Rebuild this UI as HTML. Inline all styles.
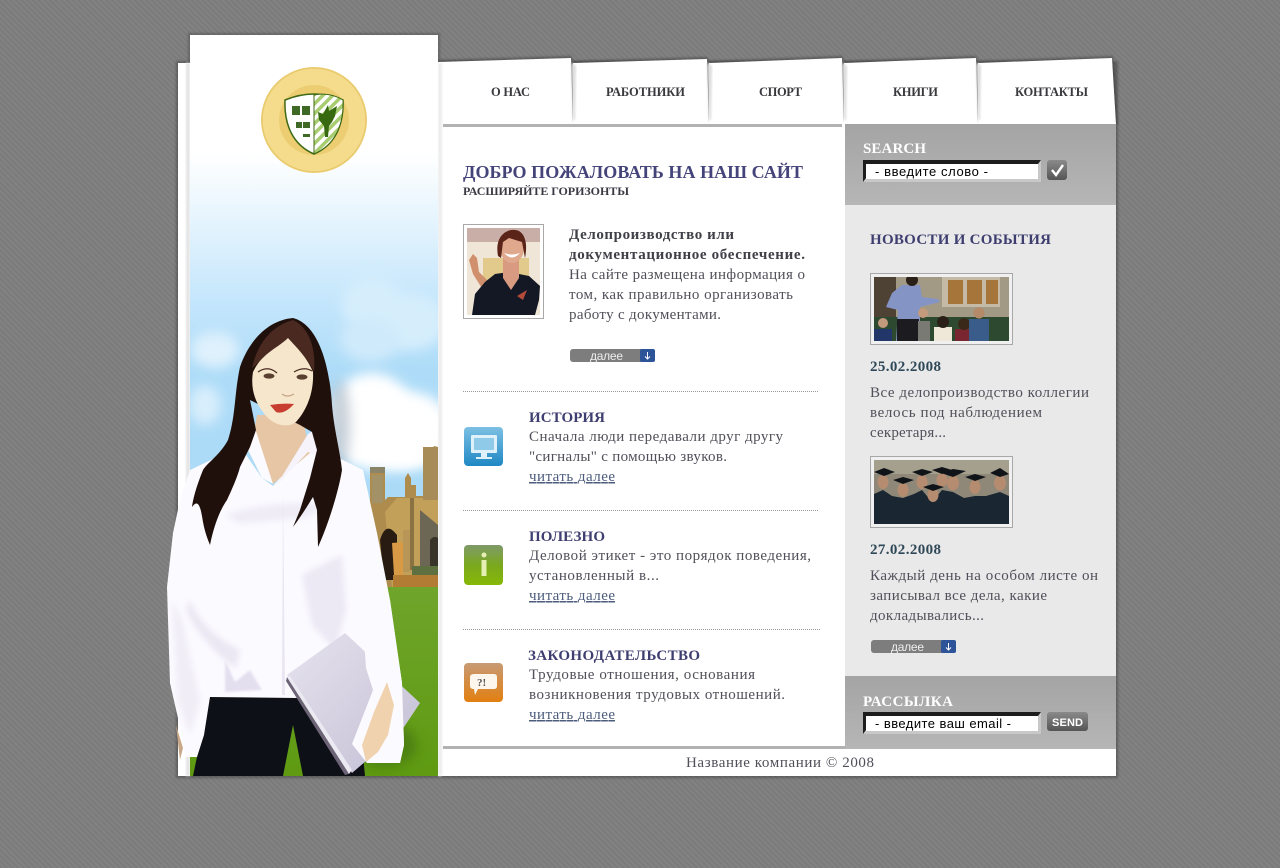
<!DOCTYPE html>
<html><head><meta charset="utf-8"><title>Добро пожаловать</title>
<style>
html,body{margin:0;padding:0;width:1280px;height:868px;overflow:hidden;background:#7f7f7f}
body{background:repeating-linear-gradient(45deg,#7b7b7b 0,#7b7b7b 2px,#828282 2px,#828282 4px)}
svg{position:absolute;left:0;top:0;display:block}
text{font-family:"Liberation Serif","Noto Serif CJK SC",serif;white-space:pre}
.b{font-size:15px;fill:#50505a}
.bb{font-size:15px;fill:#3f3f48;font-weight:bold}
.h{font-size:15px;fill:#3e3e70;font-weight:bold}
.nav{font-size:12.5px;fill:#3a3a3e;font-weight:bold}
.l{font-size:15px;fill:#4c5c7c;text-decoration:underline}
.d{font-size:15px;fill:#2f4858;font-weight:bold}
.w{font-size:15px;fill:#fff;font-weight:bold}
.s{font-family:"Liberation Sans",sans-serif;font-size:13px;fill:#000}
.m{font-family:"Liberation Sans",sans-serif;font-size:12px;fill:#eee}
</style></head><body>
<svg width="1280" height="868" viewBox="0 0 1280 868" xmlns="http://www.w3.org/2000/svg">
<defs>
<linearGradient id="sky" x1="0" y1="0" x2="0" y2="1"><stop offset="0" stop-color="#fff"/><stop offset=".16" stop-color="#fff"/><stop offset=".22" stop-color="#eef8fe"/><stop offset=".36" stop-color="#c4e6fc"/><stop offset=".45" stop-color="#aedcf8"/><stop offset="1" stop-color="#a4d6f4"/></linearGradient>
<linearGradient id="gs" x1="0" y1="0" x2="0" y2="1"><stop offset="0" stop-color="#a4a4a4"/><stop offset="1" stop-color="#b6b6b6"/></linearGradient>
<linearGradient id="gr" x1="0" y1="0" x2="0" y2="1"><stop offset="0" stop-color="#6fa52b"/><stop offset="1" stop-color="#5f9a12"/></linearGradient>
<linearGradient id="blue" x1="0" y1="0" x2="0" y2="1"><stop offset="0" stop-color="#7cc0e4"/><stop offset="1" stop-color="#1f88c4"/></linearGradient>
<linearGradient id="green" x1="0" y1="0" x2="0" y2="1"><stop offset="0" stop-color="#7f9a6a"/><stop offset=".5" stop-color="#7aa81e"/><stop offset="1" stop-color="#86b806"/></linearGradient>
<linearGradient id="orange" x1="0" y1="0" x2="0" y2="1"><stop offset="0" stop-color="#c89a74"/><stop offset="1" stop-color="#e27f10"/></linearGradient>
<linearGradient id="folder" x1="0" y1="0" x2="1" y2="1"><stop offset="0" stop-color="#e6e3ee"/><stop offset="1" stop-color="#c3bed4"/></linearGradient>
<linearGradient id="bt" x1="0" y1="0" x2="0" y2="1"><stop offset="0" stop-color="#8a8a8a"/><stop offset="1" stop-color="#555"/></linearGradient>
<filter id="b1" x="-20%" y="-20%" width="140%" height="140%"><feGaussianBlur stdDeviation="1"/></filter>
<filter id="b3" x="-30%" y="-30%" width="160%" height="160%"><feGaussianBlur stdDeviation="3"/></filter>
<filter id="b6" x="-60%" y="-60%" width="220%" height="220%"><feGaussianBlur stdDeviation="6"/></filter>
<clipPath id="pan"><rect x="190" y="35" width="248" height="741"/></clipPath>
<clipPath id="panw"><rect x="160" y="35" width="278" height="741"/></clipPath>
<pattern id="stripes" width="7" height="7" patternUnits="userSpaceOnUse" patternTransform="rotate(45)"><rect width="7" height="7" fill="#fff"/><rect width="3.500" height="7" fill="#a8cc70"/></pattern>
</defs>

<!-- page shadow and base -->
<rect x="176" y="61" width="942" height="717" fill="#333" opacity=".42" filter="url(#b1)"/>
<path d="M438 60L571 56L573 61L707 57L709 61L842 56L844 61L976 56L978 61L1113 56L1118 124H438Z" fill="#333" opacity=".45" filter="url(#b1)"/>
<rect x="188" y="33" width="252" height="32" fill="#444" opacity=".42" filter="url(#b1)"/>
<rect x="178" y="63" width="260" height="713" fill="#fff"/>
<rect x="438" y="124" width="678" height="652" fill="#fff"/>

<!-- tabs -->
<path d="M438 62L571 58L573 124L438 124Z" fill="#fff"/>
<path d="M573 63L707 59L709 124L573 124Z" fill="#fff"/>
<path d="M709 63L842 58L844 124L709 124Z" fill="#fff"/>
<path d="M844 63L976 58L978 124L844 124Z" fill="#fff"/>
<path d="M978 63L1112 58L1116 124L978 124Z" fill="#fff"/>
<path d="M571 62L576 66L575 120L573 120Z" fill="#dcdcdc" filter="url(#b1)"/>
<path d="M707 62L712 66L711 120L709 120Z" fill="#dcdcdc" filter="url(#b1)"/>
<path d="M842 62L847 66L846 120L844 120Z" fill="#dcdcdc" filter="url(#b1)"/>
<path d="M976 62L981 66L980 120L978 120Z" fill="#dcdcdc" filter="url(#b1)"/>

<text class="nav" x="491" y="96" textLength="39">О НАС</text>
<text class="nav" x="606" y="96" textLength="79">РАБОТНИКИ</text>
<text class="nav" x="759" y="96" textLength="43">СПОРТ</text>
<text class="nav" x="893" y="96" textLength="45">КНИГИ</text>
<text class="nav" x="1015" y="96" textLength="73">КОНТАКТЫ</text>

<!-- rules -->
<rect x="443" y="124" width="399" height="3" fill="#b2b2b2"/>
<rect x="443" y="746" width="402" height="3" fill="#b2b2b2"/>

<!-- left panel -->
<rect x="438" y="63" width="4" height="713" fill="#ececec" filter="url(#b1)"/>
<rect x="186" y="63" width="4" height="713" fill="#e4e4e4" filter="url(#b1)"/>
<rect x="190" y="35" width="248" height="741" fill="url(#sky)"/>
<g clip-path="url(#pan)">
 <ellipse cx="372" cy="305" rx="30" ry="28" fill="#d6eefc" filter="url(#b6)"/>
 <ellipse cx="410" cy="322" rx="36" ry="28" fill="#d6eefc" filter="url(#b6)"/>
 <ellipse cx="370" cy="340" rx="30" ry="22" fill="#cfeafb" filter="url(#b6)"/>
 <ellipse cx="372" cy="415" rx="42" ry="42" fill="#fff" filter="url(#b6)"/>
 <ellipse cx="410" cy="430" rx="42" ry="38" fill="#fff" filter="url(#b6)"/>
 <ellipse cx="385" cy="445" rx="50" ry="26" fill="#fff" filter="url(#b6)"/>
 <ellipse cx="215" cy="350" rx="24" ry="18" fill="#dff1fd" filter="url(#b6)"/>
 <ellipse cx="205" cy="405" rx="16" ry="20" fill="#d8eefc" filter="url(#b6)"/>
 <ellipse cx="340" cy="425" rx="10" ry="45" fill="#9aa8b8" opacity=".55" filter="url(#b6)"/>
 <!-- building -->
 <path d="M370 467H385V500L388 497H405V478L408 473L411 478V485H416V496H423V458L430 452L434 446L438 447V587H370Z" fill="#ad8c4e"/>
 <rect x="370" y="467" width="15" height="6" fill="#8a8468"/>
 <rect x="372" y="475" width="11" height="28" fill="#a39268"/>
 <path d="M385 512L397 498H438V587H392Z" fill="#c2a05a"/>
 <path d="M410 498H414V570H410Z" fill="#8b7242"/>
 <path d="M423 447L438 447V500H423Z" fill="#a88c58"/>
 <path d="M380 540Q386 520 397 535V580H384Z" fill="#281c12"/>
 <path d="M392 543L403 542V575H394Z" fill="#d89a44"/>
 <path d="M403 530H410V572H403Z" fill="#b89658"/>
 <path d="M420 510L438 525V570H420Z" fill="#6c6654"/>
 <path d="M430 540Q434 535 438 538V572H430Z" fill="#38342a"/>
 <rect x="412" y="566" width="26" height="10" fill="#5e7040"/>
 <rect x="393" y="575" width="45" height="12" fill="#b27c34"/>
 <rect x="190" y="587" width="248" height="189" fill="url(#gr)"/>
 <ellipse cx="385" cy="745" rx="32" ry="22" fill="#3e6e10" opacity=".6" filter="url(#b6)"/>
</g>

<g clip-path="url(#panw)">
 <!-- pants -->
 <path d="M210 695L298 695L312 720L362 745L365 776L303 776L293 725L283 776L193 776Z" fill="#0d1016"/>
 <!-- shirt -->
 <path d="M190 470L240 446L262 478L273 486L305 450L317 440L335 456L363 470L377 533L390 600L402 683L404 745L400 763L367 763L352 744L336 700L297 698L210 697L204 735L197 757L185 757L180 727L170 683L167 587L173 533L180 500Z" fill="#fbfaff"/>
 <path d="M190 600C200 625 220 640 240 650L236 668C215 655 195 630 186 610Z" fill="#ebe7f3" filter="url(#b3)"/>
 <path d="M302 575L342 555L346 610L335 650L312 625Z" fill="#ece8f4" filter="url(#b3)"/>
 <path d="M225 515C250 505 300 500 330 505L305 518L240 524Z" fill="#efecf6" filter="url(#b3)"/>
 <path d="M225 660L235 682L250 670L262 690L225 692Z" fill="#e4dfef" filter="url(#b1)"/>
 <path d="M283 490L285 695H282Z" fill="#e9e5f2"/>
 <path d="M172 600L178 700L190 735L200 700L182 620Z" fill="#f0edf6" filter="url(#b3)"/>
 <!-- neck -->
 <path d="M257 415L253 438L262 470L273 484L310 453L302 415Z" fill="#e6c6a4"/>
 <!-- collar -->
 <path d="M243 440L255 428L273 484L262 478Z" fill="#fbfaff"/>
 <path d="M308 434L317 428L318 456L308 452L276 486Z" fill="#f6f3fb"/>
 <!-- hair -->
 <path d="M293 318C270 320 250 338 240 367C234 395 236 415 228 440C220 455 208 462 203 470C195 490 193 500 192 507C199 497 201 510 203 522C205 533 208 540 210 545C214 525 220 510 227 500C234 485 238 475 240 467L250 447L256 430L250 400L300 425L312 432L317 450L310 478L300 510L293 527C302 515 308 505 313 497L317 510L318 547C326 530 338 495 342 470C340 450 334 430 332 405C330 370 320 325 293 318Z" fill="#20100c"/>
 <path d="M293 320C272 326 258 342 252 368L264 358C272 350 282 345 288 338C296 348 308 358 314 372C316 350 310 328 293 320Z" fill="#4a2a20"/>
 <!-- face -->
 <path d="M288 338C278 348 262 353 253 372C250 390 256 405 267 417C276 426 288 428 296 422C307 410 314 392 313 372C307 357 296 347 288 338Z" fill="#f6e6cc"/>
 <path d="M258 372Q268 365 277 373" fill="none" stroke="#4a2c20" stroke-width="1.200"/>
 <path d="M294 372Q304 366 312 371" fill="none" stroke="#4a2c20" stroke-width="1.200"/>
 <ellipse cx="269" cy="376" rx="5.500" ry="2.600" fill="#5a4030"/>
 <ellipse cx="302" cy="377" rx="5.500" ry="2.600" fill="#5a4030"/>
 <path d="M282 394Q287 398 294 394" fill="none" stroke="#c7a484" stroke-width="1.200"/>
 <path d="M270 405Q282 403 294 404Q284 415 276 412Z" fill="#c73e30"/>
 <!-- folder -->
 <path d="M287 675L345 633L420 703L402 730L352 773Z" fill="url(#folder)"/>
 <path d="M287 677L349 774L345 775L286 681Z" fill="#6d6478"/>
 <path d="M290 676L352 770L349 774L287 677Z" fill="#ebe9f1"/>
 <!-- right sleeve and cuff over folder -->
 <path d="M362 610L390 600L402 683L404 745L400 763L367 763L352 744L373 690L366 668Z" fill="#fbfaff"/>
 <path d="M387 682L374 712L362 745L366 762L378 752L388 735L394 705Z" fill="#f0d2ae"/>
 <path d="M176 725L180 760L183 748Z" fill="#c8a888"/>
</g>

<!-- logo -->
<circle cx="314" cy="120" r="53" fill="#f4dc8c"/>
<circle cx="314" cy="120" r="52" fill="none" stroke="#e8c96e" stroke-width="1.500"/>
<circle cx="314" cy="120" r="35" fill="#eccd72"/>
<path d="M285 100Q314 88 343 100C344 125 335 145 314 154C293 145 284 125 285 100Z" fill="#fff" stroke="#3f6a14" stroke-width="1.500"/>
<path d="M314 95Q330 92 343 100C344 125 335 145 314 154Z" fill="url(#stripes)" stroke="#3f6a14" stroke-width="1"/>
<rect x="292" y="106" width="8" height="9" fill="#3f6a25"/><rect x="302" y="106" width="8" height="9" fill="#3f6a25"/>
<rect x="296" y="122" width="6" height="6" fill="#3f6a25"/><rect x="303" y="122" width="7" height="6" fill="#3f6a25"/>
<rect x="303" y="134" width="7" height="3" fill="#3f6a25"/>
<path d="M318 112L323 114L328 105L329 111L337 106L335 116L332 122L329 126L328 137H325L324 126L319 120Z" fill="#376a10"/>

<!-- sidebar -->
<rect x="845" y="124" width="271" height="81" fill="url(#gs)"/>
<rect x="845" y="205" width="271" height="471" fill="#e9e9e9"/>
<rect x="845" y="676" width="271" height="73" fill="url(#gs)"/>

<text class="w" x="863" y="153" textLength="63">SEARCH</text>
<rect x="863" y="160" width="178" height="22" fill="#c8c8c8"/>
<path d="M863 160H1041L1038 164H866V178L863 182Z" fill="#1d1d1d"/>
<rect x="866" y="164" width="172" height="15" fill="#fff"/>
<text class="s" x="875" y="176" textLength="113">- введите слово -</text>
<rect x="1047" y="160" width="20" height="20" rx="3" fill="url(#bt)"/>
<path d="M1052 170L1056 175L1063 165" fill="none" stroke="#fff" stroke-width="2.400"/>

<text class="h" x="870" y="244" textLength="181">НОВОСТИ И СОБЫТИЯ</text>

<rect x="870.500" y="273.500" width="142" height="71" fill="#f0f0f0" stroke="#a8a8a8"/>
<svg x="874" y="277" width="135" height="64" viewBox="0 0 135 64">
 <rect width="135" height="64" fill="#8d8d80"/>
 <rect width="22" height="42" fill="#4e4234"/>
 <rect x="22" width="113" height="40" fill="#a39a86"/>
 <rect x="68" y="0" width="58" height="30" fill="#c4baa6"/>
 <rect x="74" y="3" width="15" height="24" fill="#a5753a"/><rect x="93" y="3" width="15" height="24" fill="#a5753a"/><rect x="112" y="3" width="12" height="24" fill="#a5753a"/>
 <rect y="40" width="135" height="24" fill="#2d4a30"/>
 <path d="M12 30L18 16L28 8L46 8L48 20L64 22L66 25L46 30L46 64H22L24 33Z" fill="#8494c4"/>
 <rect x="23" y="42" width="22" height="22" fill="#1c1c20"/>
 <circle cx="38" cy="3" r="6" fill="#2a2018"/>
 <rect x="0" y="52" width="18" height="12" fill="#23366a"/><circle cx="9" cy="46" r="5" fill="#c49a7c"/>
 <rect x="44" y="44" width="12" height="20" fill="#7a7a74"/><circle cx="49" cy="36" r="5" fill="#c49a7c"/>
 <rect x="60" y="50" width="18" height="14" fill="#efe8d8"/><circle cx="69" cy="45" r="6" fill="#2a2018"/>
 <rect x="81" y="52" width="20" height="12" fill="#7a2630"/><circle cx="90" cy="47" r="6" fill="#3a2818"/>
 <rect x="95" y="42" width="20" height="22" fill="#3a5c8a"/><circle cx="105" cy="36" r="5.500" fill="#b48a68"/>
</svg>
<text class="d" x="870" y="371" textLength="71">25.02.2008</text>
<text class="b" x="870" y="397" textLength="219">Все делопроизводство коллегии</text>
<text class="b" x="870" y="417" textLength="172">велось под наблюдением</text>
<text class="b" x="870" y="437" textLength="76">секретаря...</text>

<rect x="870.500" y="456.500" width="142" height="71" fill="#f0f0f0" stroke="#a8a8a8"/>
<svg x="874" y="460" width="135" height="64" viewBox="0 0 135 64">
 <rect width="135" height="64" fill="#8f8878"/>
 <rect x="0" y="0" width="135" height="14" fill="#a5a08e"/>
 <path d="M0 34L9 30L18 36L29 38L40 34L48 30L58 42L68 30L79 32L90 38L101 36L112 36L126 32L135 36V64H0Z" fill="#1a2632"/>
 <g fill="#b68c70">
  <ellipse cx="9" cy="22" rx="5.500" ry="7"/><ellipse cx="29" cy="30" rx="5.500" ry="7"/><ellipse cx="48" cy="22" rx="5.500" ry="7"/><ellipse cx="68" cy="20" rx="5.500" ry="7"/><ellipse cx="59" cy="35" rx="5.500" ry="7"/><ellipse cx="79" cy="23" rx="6" ry="7.500"/><ellipse cx="101" cy="27" rx="5.500" ry="7"/><ellipse cx="126" cy="23" rx="6" ry="7.500"/>
 </g>
 <g fill="#101419">
  <path d="M0 12L10 8L21 12L10 16Z"/><path d="M19 20L29 17L40 20L29 24Z"/><path d="M38 12L48 9L59 12L48 16Z"/><path d="M58 10L68 7L78 10L68 14Z"/><path d="M67 13L79 9L92 11L79 17Z"/><path d="M91 17L101 14L112 17L101 21Z"/><path d="M116 13L126 8L135 14L126 17Z"/><path d="M49 27L59 24L70 27L59 31Z"/>
 </g>
</svg>
<text class="d" x="870" y="554" textLength="71">27.02.2008</text>
<text class="b" x="870" y="580" textLength="228">Каждый день на особом листе он</text>
<text class="b" x="870" y="600" textLength="177">записывал все дела, какие</text>
<text class="b" x="870" y="620" textLength="114">докладывались...</text>

<!-- more button 2 -->
<rect x="871" y="640" width="85" height="13" rx="3" fill="#7d7d7d"/>
<rect x="941" y="640" width="15" height="13" rx="2" fill="#2d5398"/>
<text class="m" x="891" y="651" textLength="33">далее</text>
<path d="M948.500 643V650M946 647.500L948.500 650L951 647.500" fill="none" stroke="#fff" stroke-width="1"/>

<text class="w" x="863" y="706" textLength="90">РАССЫЛКА</text>
<rect x="863" y="712" width="178" height="22" fill="#c8c8c8"/>
<path d="M863 712H1041L1038 716H866V730L863 734Z" fill="#1d1d1d"/>
<rect x="866" y="716" width="172" height="15" fill="#fff"/>
<text class="s" x="875" y="728" textLength="136">- введите ваш email -</text>
<rect x="1047" y="712" width="41" height="19" rx="3" fill="url(#bt)"/>
<text x="1052" y="726" textLength="31" style="font-family:'Liberation Sans',sans-serif;font-size:11px;font-weight:bold;fill:#fff">SEND</text>

<!-- main content -->
<text x="463" y="178" textLength="340" style="font-size:18px;font-weight:bold;fill:#44447a">ДОБРО ПОЖАЛОВАТЬ НА НАШ САЙТ</text>
<text x="463" y="195" textLength="166" style="font-size:12px;font-weight:bold;fill:#3a3a44">РАСШИРЯЙТЕ ГОРИЗОНТЫ</text>

<rect x="463.500" y="224.500" width="80" height="94" fill="#fff" stroke="#a8a8a8"/>
<svg x="467" y="228" width="73" height="87" viewBox="0 0 73 87">
 <rect width="73" height="87" fill="#efe6d8"/>
 <rect width="73" height="14" fill="#c8aea6"/>
 <path d="M16 30H62V72H16Z" fill="#e2c98c"/>
 <path d="M2 32L6 26L10 30L12 44L22 54L16 62L6 46Z" fill="#d0906e"/>
 <path d="M5 87L8 66L18 54L28 46L42 44L62 48L73 58L72 72L68 87Z" fill="#141824"/>
 <path d="M36 28H52V50L44 62L36 50Z" fill="#d89a80"/>
 <ellipse cx="45" cy="20" rx="12" ry="15" fill="#e0a88c"/>
 <path d="M31 28C27 6 42 -1 52 3C60 8 60 20 58 30L55 14L42 10L36 14L34 30Z" fill="#5a2418"/>
 <path d="M37 25Q45 34 53 25Q45 28 37 25Z" fill="#fff"/>
 <path d="M50 68L60 62L56 72Z" fill="#b44a3a"/>
</svg>
<text class="bb" x="569" y="239" textLength="165">Делопроизводство или</text>
<text class="bb" x="569" y="259" textLength="236">документационное обеспечение.</text>
<text class="b" x="569" y="279" textLength="236">На сайте размещена информация о</text>
<text class="b" x="569" y="299" textLength="224">том, как правильно организовать</text>
<text class="b" x="569" y="319" textLength="152">работу с документами.</text>

<rect x="570" y="349" width="85" height="13" rx="3" fill="#7d7d7d"/>
<rect x="640" y="349" width="15" height="13" rx="2" fill="#2d5398"/>
<text class="m" x="590" y="360" textLength="33">далее</text>
<path d="M647.500 352V359M645 356.500L647.500 359L650 356.500" fill="none" stroke="#fff" stroke-width="1"/>

<line x1="463" y1="391.500" x2="819" y2="391.500" stroke="#999" stroke-dasharray="1 1"/>
<line x1="463" y1="510.500" x2="819" y2="510.500" stroke="#999" stroke-dasharray="1 1"/>
<line x1="463" y1="629.500" x2="820" y2="629.500" stroke="#999" stroke-dasharray="1 1"/>

<rect x="464" y="427" width="39" height="39" rx="4" fill="url(#blue)"/>
<rect x="471" y="435" width="26" height="18" rx="1" fill="#dff1f8"/>
<rect x="474" y="438" width="20" height="12" fill="#8fcbe8"/>
<path d="M481 453H487V457H492V459H476V457H481Z" fill="#dff1f8"/>
<text class="h" x="529" y="422" textLength="76">ИСТОРИЯ</text>
<text class="b" x="529" y="441" textLength="254">Сначала люди передавали друг другу</text>
<text class="b" x="529" y="461" textLength="198">"сигналы" с помощью звуков.</text>
<text class="l" x="529" y="481" textLength="86">читать далее</text>

<rect x="464" y="545" width="39" height="40" rx="4" fill="url(#green)"/>
<circle cx="484" cy="555" r="2.500" fill="#e6efb4"/>
<rect x="481.500" y="560" width="5" height="16" fill="#e6efb4"/>
<text class="h" x="529" y="541" textLength="76">ПОЛЕЗНО</text>
<text class="b" x="529" y="560" textLength="282">Деловой этикет - это порядок поведения,</text>
<text class="b" x="529" y="580" textLength="130">установленный в...</text>
<text class="l" x="529" y="600" textLength="86">читать далее</text>

<rect x="464" y="663" width="39" height="39" rx="4" fill="url(#orange)"/>
<path d="M474 674H494Q497 674 497 677V686Q497 689 494 689H478L475 695L474 689Q470 689 470 686V677Q470 674 474 674Z" fill="#fdf6ec"/>
<text x="477" y="686" style="font-size:11px;font-weight:bold;fill:#555">?!</text>
<text class="h" x="528" y="660" textLength="172">ЗАКОНОДАТЕЛЬСТВО</text>
<text class="b" x="529" y="679" textLength="226">Трудовые отношения, основания</text>
<text class="b" x="529" y="699" textLength="256">возникновения трудовых отношений.</text>
<text class="l" x="529" y="719" textLength="86">читать далее</text>

<text class="b" x="686" y="767" textLength="188">Название компании © 2008</text>
</svg>
</body></html>
